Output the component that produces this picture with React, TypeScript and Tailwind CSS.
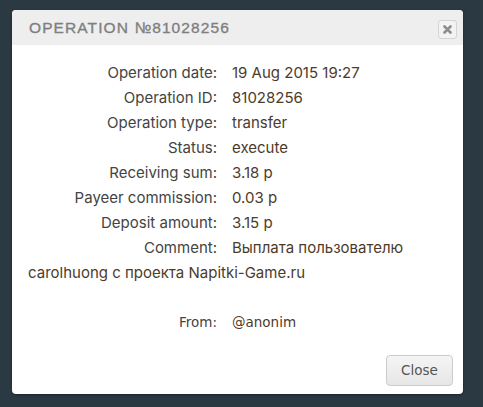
import React from 'react';

const ROWS: { label: string; value: string }[] = [
  { label: 'Operation date:', value: '19 Aug 2015 19:27' },
  { label: 'Operation ID:', value: '81028256' },
  { label: 'Operation type:', value: 'transfer' },
  { label: 'Status:', value: 'execute' },
  { label: 'Receiving sum:', value: '3.18 р' },
  { label: 'Payeer commission:', value: '0.03 р' },
  { label: 'Deposit amount:', value: '3.15 р' },
];

const App: React.FC = () => {
  return (
    <div className="w-[483px] h-[407px] bg-[#2b3a42] pt-[10px] pl-[12px]">
      <div className="w-[451px] h-[384px] bg-white rounded-[4px] overflow-hidden flex flex-col shadow-[0_1px_3px_rgba(0,0,0,0.4)]">
        <header className="h-[35px] bg-[#eeeeee] flex items-center justify-between pl-[17px] pr-[6px] shrink-0">
          <h2 className="text-[15.5px] tracking-[1.1px] text-[#7f7f7f] font-['Liberation_Sans',sans-serif] leading-none [-webkit-text-stroke:0.35px_#7f7f7f]">
            OPERATION №81028256
          </h2>
          <button className="w-[19px] h-[19px] border border-[#d4d4d4] rounded-[3px] flex items-center justify-center bg-[#f3f3f3] mt-[4px]">
            <svg width="9" height="9" viewBox="0 0 9 9">
              <path d="M1.5 1.5 L7.5 7.5 M7.5 1.5 L1.5 7.5" stroke="#8d8d8d" strokeWidth="2.6" strokeLinecap="round" />
            </svg>
          </button>
        </header>

        <div className="flex-1 pt-[15px] pl-[16px] pr-[20px] text-[15px] leading-[25px] font-['Inter',sans-serif] text-[#444]">
          {ROWS.map(r => (
            <div key={r.label} className="flex">
              <span className="w-[189px] text-right shrink-0">{r.label}</span>
              <span className="ml-[15px] text-[#4d3b2a]">{r.value}</span>
            </div>
          ))}
          <p>
            <span className="inline-block w-[204px] pr-[15px] text-right">Comment:</span>
            <span className="text-[#4d3b2a]">Выплата пользователю carolhuong с проекта Napitki-Game.ru</span>
          </p>
          <div className="flex mt-[25px] font-['DejaVu_Sans',sans-serif] text-[13.5px]">
            <span className="w-[189px] text-right shrink-0">From:</span>
            <span className="ml-[15px] text-[#4d3b2a]">@anonim</span>
          </div>
        </div>

        <footer className="flex justify-end pr-[10px] pb-[8px]">
          <button className="w-[67px] h-[31px] rounded-[4px] border border-[#cccccc] bg-gradient-to-b from-[#f5f5f5] to-[#e6e6e6] text-[13.5px] text-[#555] font-['DejaVu_Sans',sans-serif]">
            Close
          </button>
        </footer>
      </div>
    </div>
  );
};

export default App;
